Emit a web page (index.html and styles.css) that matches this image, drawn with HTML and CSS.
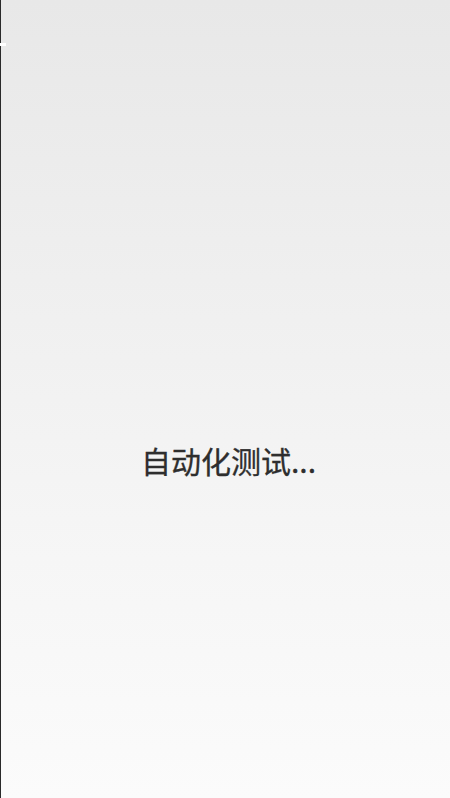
FILE: index.html
```html
<!DOCTYPE html>
<html lang="zh">
<head>
<meta charset="utf-8">
<link rel="stylesheet" href="styles.css">
</head>
<body>
<div class="screen">
  <div class="edge-mark"></div>
  <div class="loading">自动化测试...</div>
</div>
</body>
</html>
```
FILE: styles.css
```css
html, body {
  margin: 0;
  padding: 0;
  width: 450px;
  height: 798px;
  overflow: hidden;
}
.screen {
  position: relative;
  box-sizing: border-box;
  width: 450px;
  height: 798px;
  border-left: 1px solid #2a2a2a;
  background: linear-gradient(to bottom, #e8e8e8 0%, #f6f6f6 70%, #fbfbfb 100%);
  display: flex;
  align-items: center;
  justify-content: center;
}
.edge-mark {
  position: absolute;
  left: -1px;
  top: 43px;
  width: 6px;
  height: 3px;
  background: #ffffff;
}
.loading {
  font-family: "Noto Sans CJK SC", "Noto Sans", sans-serif;
  font-size: 30px;
  font-weight: 400;
  color: #2e2e2e;
  -webkit-text-stroke: 0.3px #2e2e2e;
  margin-top: 122px;
  margin-left: 6px;
}
```
